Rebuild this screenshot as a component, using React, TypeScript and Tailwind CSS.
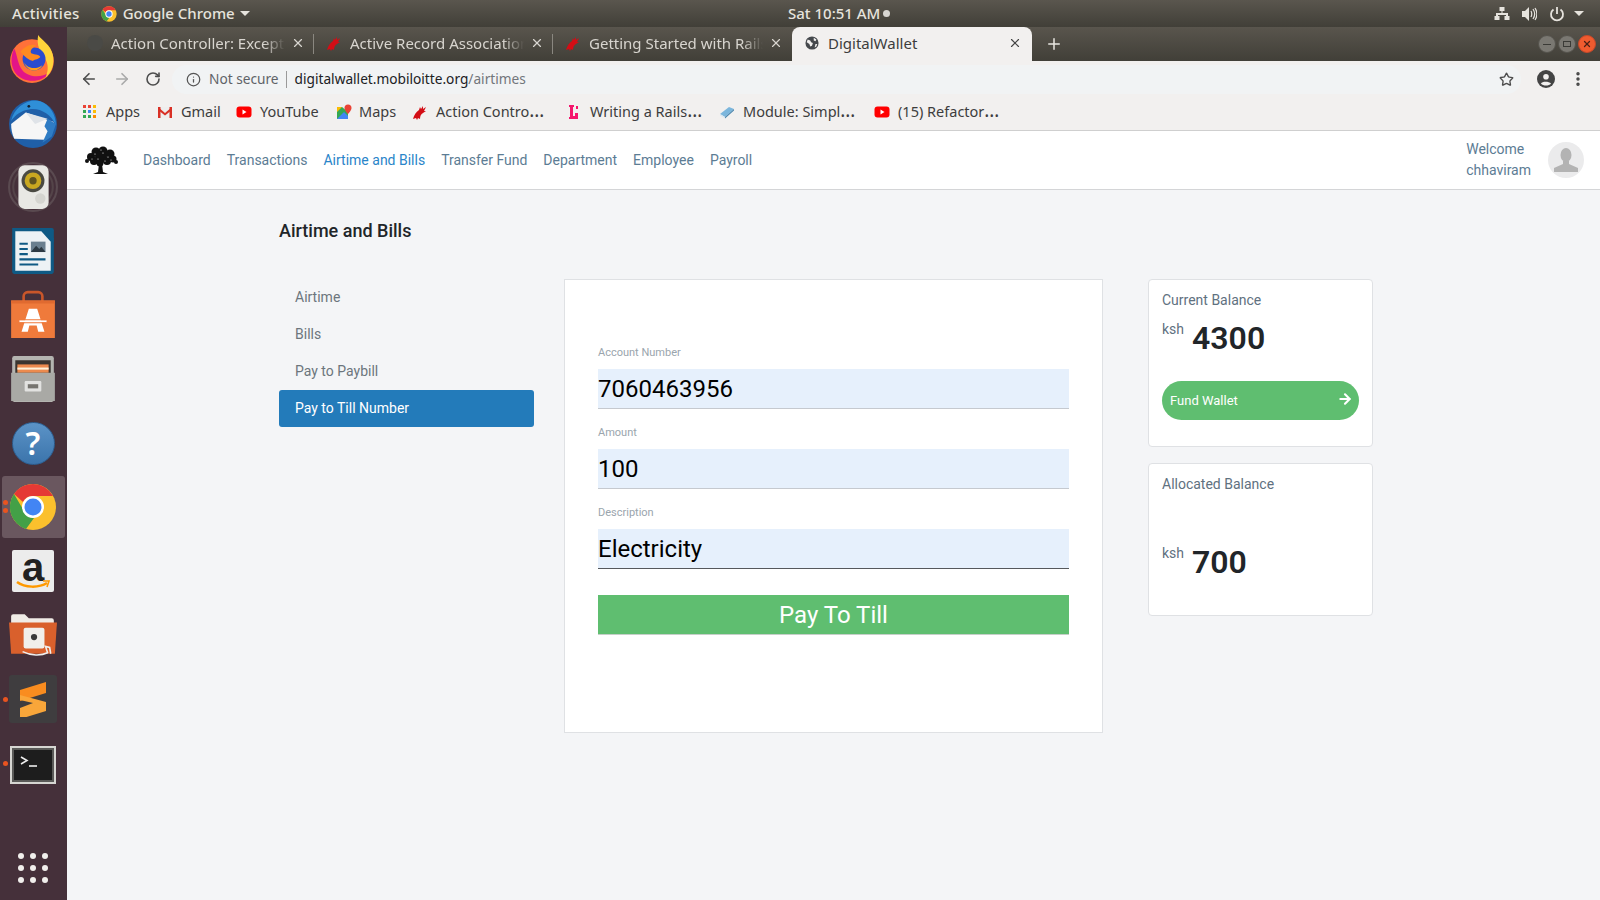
import { ArrowLeft, ArrowRight, Info, MoreVertical, Plus, RotateCw, Star, X } from "lucide-react"

const TABS = ["Action Controller: Exception", "Active Record Associations", "Getting Started with Rails"]
const NAV_LINKS = ["Dashboard", "Transactions", "Airtime and Bills", "Transfer Fund", "Department", "Employee", "Payroll"]
const MENU = ["Airtime", "Bills", "Pay to Paybill"]

const RailsMark = ({ className }: { className?: string }) => (
  <svg viewBox="0 0 16 16" className={className}>
    <path d="M1 15c1-4 3-7 6-9l1-3 1 2 2-3 0 3 3-2-2 4 2 0-3 2c-2 1-3 3-3 6l-2-1-1 2-1-2z" fill="#d30d15" />
  </svg>
)

const YoutubeMark = () => (
  <svg viewBox="0 0 16 16" className="size-4 shrink-0">
    <rect x="0.5" y="2.5" width="15" height="11" rx="3" fill="#f00" />
    <path d="M6.500 5.500v5l4-2.500z" fill="#fff" />
  </svg>
)

const AppsMark = () => (
  <div className="grid grid-cols-3 gap-[2px] shrink-0">
    {["#ea4335", "#ea4335", "#fbbc05", "#34a853", "#4285f4", "#fbbc05", "#34a853", "#34a853", "#fb8c00"].map((c, i) => (
      <span key={i} className="size-[3px]" style={{ backgroundColor: c }} />
    ))}
  </div>
)

const GmailMark = () => (
  <svg viewBox="0 0 16 16" className="size-4 shrink-0">
    <path d="M1 3h14v11H1z" fill="#eee" />
    <path d="M1 3h2.500v11H1zM12.500 3H15v11h-2.500z" fill="#d93025" />
    <path d="M1 3l7 6 7-6v3L8 11.500 1 6z" fill="#d93025" />
  </svg>
)

const MapsMark = () => (
  <svg viewBox="0 0 16 16" className="size-4 shrink-0">
    <path d="M1 3h11v12H1z" fill="#34a853" />
    <path d="M1 15l7-7 4 4v3z" fill="#4285f4" />
    <path d="M1 3h5L1 8z" fill="#fbbc05" />
    <path d="M6 3h6v5z" fill="#e8eaed" />
    <path d="M12 0.500a3.500 3.500 0 0 1 3.500 3.500c0 2.500-3.500 6-3.500 6s-3.500-3.500-3.500-6A3.500 3.500 0 0 1 12 0.500z" fill="#ea4335" />
  </svg>
)

const WritingMark = () => (
  <svg viewBox="0 0 16 16" className="size-4 shrink-0">
    <path d="M3 1h5v2H7v9h2V9h3v6H3v-2h1V3H3z" fill="#f5166c" />
    <rect x="10" y="2" width="2" height="3" fill="#f5166c" />
  </svg>
)

const ModuleMark = () => (
  <svg viewBox="0 0 16 16" className="size-4 shrink-0">
    <path d="M1 10l9-7 5 2-9 8z" fill="#7cb6dc" />
    <path d="M1 10l5 3v1.500L1 11.500z" fill="#dbe8f1" />
    <path d="M6 13l9-8v1.500L6 14.500z" fill="#4a85ad" />
  </svg>
)

const BOOKMARKS = [
  { label: "Apps", icon: <AppsMark />, width: "w-[74px]", gap: "gap-[10px]" },
  { label: "Gmail", icon: <GmailMark />, width: "w-[79px]", gap: "gap-[8px]" },
  { label: "YouTube", icon: <YoutubeMark />, width: "w-[100px]", gap: "gap-[8px]" },
  { label: "Maps", icon: <MapsMark />, width: "w-[76px]", gap: "gap-[7px]" },
  { label: "Action Contro", more: true, icon: <RailsMark className="size-4 shrink-0" />, width: "w-[154px]", gap: "gap-[8px]" },
  { label: "Writing a Rails", more: true, icon: <WritingMark />, width: "w-[153px]", gap: "gap-[8px]" },
  { label: "Module: Simpl", more: true, icon: <ModuleMark />, width: "w-[155px]", gap: "gap-[8px]" },
  { label: "(15) Refactor", more: true, icon: <YoutubeMark />, width: "w-[140px]", gap: "gap-[8px]" },
]

const Firefox = () => (
  <svg viewBox="0 0 48 48" className="size-[50px]">
    <circle cx="23" cy="26" r="21" fill="#ff7139" />
    <path d="M6 14c-5 10-3 24 8 29 9 4 20 2 26-6-8 5-20 5-26-2C9 29 9 20 6 14z" fill="#e31587" />
    <path d="M29 1c3 5 12 9 14 19 2 9-1 17-7 22 3-7 3-14-1-19-4-6-8-12-6-22z" fill="#ffd43b" />
    <circle cx="25" cy="24" r="11" fill="#2a4ccf" />
    <path d="M12 17c4-5 10-8 15-6-3 2-6 4-5 7 1 2 8 1 9 4-3 3-6 2-7 4-4-1-8-4-12-9z" fill="#ff8a1f" />
    <path d="M14 25c3 8 12 10 19 5-4 7-14 8-19-5z" fill="#ff9f1c" />
  </svg>
)

const Thunderbird = () => (
  <svg viewBox="0 0 48 48" className="size-[50px]">
    <circle cx="24" cy="25" r="23" fill="#1f5fa8" />
    <path d="M3 22C6 8 20 0 31 3c9 3 15 13 15 23-5-11-16-17-26-15C13 12 7 16 3 22z" fill="#2f8fd8" />
    <path d="M3 25l14-11 27 9-9 17-29-1c-2-4-3-9-3-14z" fill="#f6f6f6" />
    <path d="M17 14l9 11 12-5-21-6z" fill="#dfe3e8" />
    <path d="M38 20l8 5-4 12-9 6 5-11-3-5 3-7z" fill="#2f7cc4" />
    <circle cx="20" cy="8" r="1.300" fill="#123" />
  </svg>
)

const Speaker = () => (
  <svg viewBox="0 0 48 48" className="size-[50px]">
    <circle cx="24" cy="24" r="23" fill="none" stroke="#5a4a50" strokeWidth="2" />
    <circle cx="24" cy="24" r="19" fill="none" stroke="#544449" strokeWidth="2" />
    <rect x="10" y="3" width="29" height="42" rx="6" fill="#e8e8e4" />
    <circle cx="24" cy="18" r="11" fill="#4a4a42" />
    <circle cx="24" cy="18" r="8" fill="#c9a820" />
    <circle cx="24" cy="18" r="3.500" fill="#5f5420" />
    <circle cx="31" cy="35" r="5" fill="#d5d5d0" />
  </svg>
)

const Writer = () => (
  <svg viewBox="0 0 48 48" className="size-[50px]">
    <path d="M4 2h30l10 10v32a2 2 0 0 1-2 2H6a2 2 0 0 1-2-2z" fill="#0f5a85" />
    <path d="M7 5h25l9 10v28H7z" fill="#edf2f5" />
    <path d="M30 2h12a2 2 0 0 1 2 2v12z" fill="#0f5a85" />
    <path d="M11 16h8v2h-8zM11 21h8v2h-8zM11 26h8v2h-8zM11 31h25v2H11zM11 36h18v2H11z" fill="#0f5a85" />
    <rect x="22" y="15" width="14" height="10" fill="#6a7f8f" />
    <path d="M22 25l5-6 3 3 2-2 4 5z" fill="#2d3a44" />
  </svg>
)

const SoftwareBag = () => (
  <svg viewBox="0 0 48 48" className="size-[50px]">
    <path d="M15 14V6a4 4 0 0 1 4-4h10a4 4 0 0 1 4 4v8" fill="none" stroke="#c9562a" strokeWidth="2.500" />
    <path d="M3 10h42v36H3z" fill="#ef7a3b" />
    <path d="M3 10h42v3H3z" fill="#e06a30" />
    <path d="M20 18h8l7 22h-6l-1.500-6h-7L19 40h-6z" fill="#fff" />
    <path d="M11 29h26v2H11z" fill="#fff" />
    <path d="M11 28h26v1H11zM11 31h26v1H11z" fill="#ef7a3b" />
  </svg>
)

const Cabinet = () => (
  <svg viewBox="0 0 48 48" className="size-[50px]">
    <rect x="4" y="2" width="40" height="44" rx="2" fill="#b4b4b0" />
    <rect x="7" y="6" width="34" height="13" fill="#3a3530" />
    <rect x="9" y="10" width="30" height="8" fill="#ec8a4e" />
    <rect x="9" y="13" width="30" height="2" fill="#fff1d8" />
    <path d="M3 18h42v27H3z" fill="#a9a9a5" />
    <rect x="16" y="26" width="16" height="10" rx="1" fill="#e2e2e0" />
    <rect x="19" y="29" width="10" height="4" fill="#76746f" />
  </svg>
)

const Chrome = () => (
  <svg viewBox="0 0 48 48" className="size-[48px]">
    <circle cx="24" cy="24" r="23" fill="#fbc02d" />
    <path d="M24 1a23 23 0 0 1 20 12H24a11 11 0 0 0-10 6L5 11A23 23 0 0 1 24 1z" fill="#e53935" />
    <path d="M5 11l10 17a11 11 0 0 0 10 7l-8 11A23 23 0 0 1 5 11z" fill="#43a047" />
    <circle cx="24" cy="24" r="11" fill="#fff" />
    <circle cx="24" cy="24" r="8.500" fill="#4285f4" />
  </svg>
)

const Folder = () => (
  <svg viewBox="0 0 48 48" className="size-[50px]">
    <path d="M3 6a2 2 0 0 1 2-2h11l4 4h22a2 2 0 0 1 2 2v8H3z" fill="#f0ece6" />
    <path d="M1 12h46l-2 30H3z" fill="#d9602c" />
    <rect x="15" y="17" width="20" height="20" rx="2" fill="#f1efeb" />
    <circle cx="25" cy="26" r="3" fill="#3a3a3a" />
    <path d="M14 40c8 4 18 4 24 1l-2-6 4 1 1 6" fill="none" stroke="#eee" strokeWidth="1.500" />
  </svg>
)

const Sublime = () => (
  <div className="size-[48px] rounded-[3px] bg-[#3f3d3f] flex items-center justify-center">
    <svg viewBox="0 0 28 36" className="h-[36px] w-[28px]">
      <path d="M27 1v11L1 20V9z" fill="#f98c1f" />
      <path d="M1 14l26 7v9L1 38V27l13-5-13-3z" fill="#f9a63a" />
    </svg>
  </div>
)

const Terminal = () => (
  <div className="mt-[3px] h-[38px] w-[46px] border-[2px] border-[#d6d6d2] bg-[#1d1d1d] shadow-[inset_0_0_0_2px_#5a5a58] flex items-start pl-2 pt-2">
    <svg viewBox="0 0 20 12" className="w-[20px] h-[12px]">
      <path d="M1 1l6 3.500L1 8" fill="none" stroke="#eee" strokeWidth="1.600" />
      <path d="M9 10h8" stroke="#eee" strokeWidth="1.600" />
    </svg>
  </div>
)

const HelpIcon = () => (
  <div className="size-[43px] rounded-full bg-gradient-to-b from-[#5b93c7] to-[#3b74ab] border border-[#2c5f92] flex items-center justify-center text-white font-semibold text-[32px] leading-none font-['Noto_Sans',sans-serif]">
    ?
  </div>
)

const AmazonIcon = () => (
  <div className="relative size-[42px] rounded-[2px] bg-[#ececec] flex justify-center">
    <span className="text-[40px] leading-[34px] font-bold text-[#222] font-['Liberation_Sans',sans-serif]">a</span>
    <svg viewBox="0 0 36 10" className="absolute bottom-[2px] left-[3px] w-[36px] h-[10px]">
      <path d="M2 2c8 6 22 6 30 1" fill="none" stroke="#f90" strokeWidth="2.500" />
      <path d="M28 1h6l-2 6" fill="none" stroke="#f90" strokeWidth="1.600" />
    </svg>
  </div>
)

const Dot = ({ className }: { className: string }) => (
  <span className={`absolute left-[3px] size-[5px] rounded-full bg-[#e95420] ${className}`} />
)

const DOCK = [
  { key: "firefox", icon: <Firefox /> },
  { key: "thunderbird", icon: <Thunderbird /> },
  { key: "speaker", icon: <Speaker /> },
  { key: "writer", icon: <Writer /> },
  { key: "bag", icon: <SoftwareBag /> },
  { key: "cabinet", icon: <Cabinet /> },
  { key: "help", icon: <HelpIcon /> },
  { key: "chrome", icon: <Chrome />, active: true },
  { key: "amazon", icon: <AmazonIcon /> },
  { key: "folder", icon: <Folder /> },
  { key: "sublime", icon: <Sublime />, dot: true },
  { key: "terminal", icon: <Terminal />, dot: true },
]

const Dock = () => (
  <aside className="w-[67px] shrink-0 bg-[#45303a] flex flex-col">
    {DOCK.map((d) => (
      <div key={d.key} className="relative h-16 pr-px flex items-center justify-center">
        {d.active && <div className="absolute inset-x-[2px] inset-y-px rounded-[3px] bg-[#6a575f]" />}
        {d.active && <Dot className="top-[25px]" />}
        {d.active && <Dot className="top-[33px]" />}
        {d.dot && <Dot className="top-[30px]" />}
        <div className="relative">{d.icon}</div>
      </div>
    ))}
    <div className="mt-auto mb-[17px] grid grid-cols-3 gap-x-[6px] gap-y-[6px] self-center pr-px">
      {Array.from({ length: 9 }).map((_, i) => (
        <span key={i} className="size-[6px] rounded-full bg-[#f1efec]" />
      ))}
    </div>
  </aside>
)

const TopBar = () => (
  <header className="h-[27px] shrink-0 bg-gradient-to-b from-[#5a564e] to-[#413f38] flex items-center text-[15px] font-medium text-[#e6e3dd] relative font-['Noto_Sans',sans-serif]">
    <span className="ml-3 tracking-[0.3px]">Activities</span>
    <svg viewBox="0 0 48 48" className="ml-[21px] size-4">
      <circle cx="24" cy="24" r="23" fill="#fbc02d" />
      <path d="M24 1a23 23 0 0 1 20 12H24a11 11 0 0 0-10 6L5 11A23 23 0 0 1 24 1z" fill="#e53935" />
      <path d="M5 11l10 17a11 11 0 0 0 10 7l-8 11A23 23 0 0 1 5 11z" fill="#43a047" />
      <circle cx="24" cy="24" r="11" fill="#fff" />
      <circle cx="24" cy="24" r="8" fill="#4285f4" />
    </svg>
    <span className="ml-[6px]">Google Chrome</span>
    <span className="ml-[5px] border-x-[5px] border-x-transparent border-t-[5px] border-t-[#e6e3dd]" />
    <div className="absolute left-[788px] flex items-center gap-[3px]">
      <span>Sat 10:51 AM</span>
      <span className="size-[7px] rounded-full bg-[#d8d6d2]" />
    </div>
    <div className="ml-auto mr-[16px] flex items-center">
      <svg viewBox="0 0 16 16" className="size-4 fill-[#e6e3dd]">
        <path d="M5.500 1h5v4h-2v2H14v3h1.500v4h-5v-4H12V9H4v1h1.500v4h-5v-4H2V7h5.500V5h-2z" />
      </svg>
      <svg viewBox="0 0 16 16" className="ml-[11px] size-4">
        <path d="M1 5h3l4-4v14l-4-4H1z" fill="#e6e3dd" />
        <path d="M10 5c1 2 1 4 0 6M12 3c2 3 2 7 0 10M14 2c2.500 4 2.500 8 0 12" fill="none" stroke="#e6e3dd" strokeWidth="1.200" />
      </svg>
      <svg viewBox="0 0 16 16" className="ml-[12px] size-4 fill-none stroke-[#e6e3dd] stroke-[1.800]">
        <path d="M8 1v7M4.500 3.500a6 6 0 1 0 7 0" />
      </svg>
      <span className="ml-[9px] border-x-[5px] border-x-transparent border-t-[5px] border-t-[#e6e3dd]" />
    </div>
  </header>
)

const TabStrip = () => (
  <div className="h-[34px] shrink-0 bg-gradient-to-b from-[#59554d] to-[#413f38] flex items-stretch pl-2 text-[15px] font-['Noto_Sans',sans-serif]">
    {TABS.map((tab, i) => (
      <div key={tab} className={`w-[239px] flex items-center pl-[12px] pr-[9px] pb-[2px] text-[#d8d5cf] ${i < 2 ? "relative" : ""}`}>
        {i === 0 ? <span className="size-[16px] rounded-full bg-[#4a4a46] shrink-0" /> : <RailsMark className="size-4 shrink-0" />}
        <span className="ml-[8px] flex-1 overflow-hidden whitespace-nowrap [mask-image:linear-gradient(to_right,black_88%,transparent)]">{tab}</span>
        <X className="ml-[6px] size-[14px] shrink-0 text-[#d8d5cf]" />
        {i < 2 && <span className="absolute right-0 top-[7px] h-5 w-px bg-[#8a8780]" />}
      </div>
    ))}
    <div className="w-[240px] rounded-t-[8px] bg-[#f2f0ef] flex items-center pl-[13px] pr-[10px] pb-[2px] text-[#3d3d3d]">
      <svg viewBox="0 0 16 16" className="size-[14px] shrink-0">
        <circle cx="8" cy="8" r="7.500" fill="#45484c" />
        <path d="M3 4l3 1 1 2 2 1-1 3-2 1-1-3-3-2zM10 2l3 2-1 2-2-1zM12 9l2 0-1 3-2 1z" fill="#f2f0ef" />
      </svg>
      <span className="ml-[9px] flex-1">DigitalWallet</span>
      <X className="size-[14px] text-[#444]" />
    </div>
    <Plus className="ml-[13px] size-[18px] self-center text-[#e8e6e1]" />
    <div className="ml-auto mr-[4px] flex items-center gap-[2px]">
      <span className="size-[18px] rounded-full bg-[#7a7872] border border-[#55534d] flex items-center justify-center">
        <span className="h-px w-2 bg-[#3a3a36]" />
      </span>
      <span className="size-[18px] rounded-full bg-[#7a7872] border border-[#55534d] flex items-center justify-center">
        <span className="h-[6px] w-2 border border-[#3a3a36]" />
      </span>
      <span className="size-[18px] rounded-full bg-[#ef5b2f] border border-[#c7482a] flex items-center justify-center">
        <X className="size-[10px] text-[#4a2015]" strokeWidth={3} />
      </span>
    </div>
  </div>
)

const Toolbar = () => (
  <div className="h-[34px] shrink-0 bg-[#f2f0ef] pt-[2px] flex items-center font-['Noto_Sans',sans-serif]">
    <ArrowLeft className="ml-[13px] size-[18px] text-[#4d4d4d]" strokeWidth={2.2} />
    <ArrowRight className="ml-[15px] size-[18px] text-[#a9a9a9]" strokeWidth={2.2} />
    <RotateCw className="ml-[14px] size-[16px] text-[#4d4d4d]" strokeWidth={2.4} />
    <div className="ml-[11px] h-[29px] w-[1349px] rounded-full bg-[#f1f3f4] flex items-center pl-[14px] text-[13.7px]">
      <Info className="size-[15px] text-[#555]" />
      <span className="ml-[8px] text-[#5f6368]">Not secure</span>
      <span className="ml-[7px] h-[17px] w-px bg-[#9a9a9a]" />
      <span className="ml-[8px] text-[#202124]">digitalwallet.mobiloitte.org</span>
      <span className="text-[#72767b]">/airtimes</span>
      <Star className="ml-auto mr-[7px] size-[15px] text-[#4d4d4d]" strokeWidth={2.2} />
    </div>
    <svg viewBox="0 0 16 16" className="ml-[16px] size-[18px] shrink-0">
      <circle cx="8" cy="8" r="8" fill="#444" />
      <circle cx="8" cy="6" r="2.500" fill="#f2f0ef" />
      <path d="M3.500 12c1-2 7-2 9 0-2 2.500-7 2.500-9 0z" fill="#f2f0ef" />
    </svg>
    <MoreVertical className="ml-[14px] size-[18px] text-[#444]" strokeWidth={2.6} />
  </div>
)

const BookmarksBar = () => (
  <div className="h-[36px] shrink-0 bg-[#f2f0ef] border-b border-[#cfcfcf] flex items-center pl-[16px] pb-[2px] text-[14.5px] text-[#3d3d3d] font-['Noto_Sans',sans-serif]">
    {BOOKMARKS.map((b) => (
      <div key={b.label} className={`${b.width} ${b.gap} flex items-center whitespace-nowrap`}>
        {b.icon}
        <span>
          {b.label}
          {b.more && <span className="text-[19px] leading-none">…</span>}
        </span>
      </div>
    ))}
  </div>
)

const TreeLogo = () => (
  <svg viewBox="0 0 36 30" className="h-[30px] w-[36px]">
    <g fill="#111">
      <circle cx="8" cy="12" r="4" />
      <circle cx="13" cy="7" r="4.500" />
      <circle cx="20" cy="6" r="4.500" />
      <circle cx="27" cy="9" r="4.500" />
      <circle cx="30" cy="14" r="3.500" />
      <circle cx="18" cy="12" r="6" />
      <circle cx="11" cy="16" r="4" />
      <circle cx="24" cy="16" r="4" />
      <circle cx="4" cy="16" r="2" />
      <circle cx="33" cy="17" r="2" />
      <circle cx="17" cy="18" r="3.500" />
      <path d="M16 19h3l1 8 5 2H10l5-2z" />
    </g>
    <g fill="#fff">
      <circle cx="12" cy="9" r="0.600" />
      <circle cx="20" cy="8" r="0.600" />
      <circle cx="25" cy="12" r="0.600" />
      <circle cx="15" cy="14" r="0.600" />
      <circle cx="9" cy="14" r="0.500" />
      <circle cx="22" cy="16" r="0.600" />
      <circle cx="28" cy="15" r="0.500" />
      <circle cx="18" cy="5" r="0.500" />
    </g>
  </svg>
)

const Avatar = () => (
  <svg viewBox="0 0 36 36" className="size-9 rounded-full">
    <rect width="36" height="36" fill="#ebebec" />
    <ellipse cx="18" cy="13" rx="5.500" ry="7" fill="#b3b3b3" />
    <path d="M15 19v3l-9 4v4h24v-4l-9-4v-3z" fill="#b3b3b3" />
  </svg>
)

const AppNavbar = () => (
  <nav className="h-[59px] shrink-0 bg-white border-b border-[#d4d5d7] flex items-center pl-[16px] pr-[16px] text-sm text-[#5c7c94]">
    <TreeLogo />
    <ul className="ml-[24px] flex items-center gap-4">
      {NAV_LINKS.map((link) => (
        <li key={link} className={link === "Airtime and Bills" ? "text-[#2a85c9]" : ""}>
          {link}
        </li>
      ))}
    </ul>
    <div className="ml-auto leading-[21px]">
      <div>Welcome</div>
      <div>chhaviram</div>
    </div>
    <div className="ml-[17px]">
      <Avatar />
    </div>
  </nav>
)

const Field = ({ label, value, focused }: { label: string; value: string; focused?: boolean }) => (
  <div className="flex flex-col">
    <label className="text-[11px] leading-[13px] text-[#9aa5ad]">{label}</label>
    <input
      readOnly
      value={value}
      className={`mt-[10px] h-10 w-full bg-[#e6f0fc] border-b text-2xl text-black outline-none ${focused ? "border-[#55585c]" : "border-[#c5c9cf]"}`}
    />
  </div>
)

const PayForm = () => (
  <section className="w-[539px] h-[454px] shrink-0 bg-white border border-[#dfe1e4] px-[33px] pt-[66px]">
    <div className="flex flex-col gap-[17px]">
      <Field label="Account Number" value="7060463956" />
      <Field label="Amount" value="100" />
      <Field label="Description" value="Electricity" focused />
    </div>
    <button className="mt-[26px] h-10 w-full bg-[#5fbe70] border-b border-[#c5cfc8] text-2xl text-white">Pay To Till</button>
  </section>
)

const Amount = ({ value }: { value: string }) => (
  <div className="flex items-start">
    <span className="text-sm text-[#5f7180] mt-[7px]">ksh</span>
    <span className="ml-[8px] text-[32px] leading-[46px] font-semibold text-[#212529] mt-[3px]">{value}</span>
  </div>
)

const Balances = () => (
  <div className="ml-[45px] w-[225px] flex flex-col gap-4">
    <div className="h-[168px] rounded-[4px] bg-white border border-[#dfe1e4] pl-[13px] pr-[13px] pt-[10px]">
      <div className="text-sm leading-[20px] text-[#5f7180]">Current Balance</div>
      <div className="mt-[2px]">
        <Amount value="4300" />
      </div>
      <button className="mt-[20px] h-[39px] w-full rounded-full bg-[#5fbe70] pl-[8px] pr-[6px] flex items-center justify-between text-[13px] text-white">
        <span>Fund Wallet</span>
        <ArrowRight className="size-4 -mt-[3px]" strokeWidth={3.2} />
      </button>
    </div>
    <div className="h-[153px] rounded-[4px] bg-white border border-[#dfe1e4] pl-[13px] pt-[10px]">
      <div className="text-sm leading-[20px] text-[#5f7180]">Allocated Balance</div>
      <div className="mt-[42px]">
        <Amount value="700" />
      </div>
    </div>
  </div>
)

const Airtime = () => (
  <main className="flex-1 bg-[#f4f5f7] pl-[212px] pt-[28px] font-['Roboto',sans-serif]">
    <h1 className="text-lg leading-[26px] font-medium text-[#212529]">Airtime and Bills</h1>
    <div className="mt-[35px] flex items-start">
      <ul className="w-[255px] shrink-0 mr-[30px] text-sm text-[#6c757d]">
        {MENU.map((item) => (
          <li key={item} className="h-[37px] pl-4 pb-[2px] flex items-center">
            {item}
          </li>
        ))}
        <li className="h-[37px] pl-4 pb-[2px] flex items-center rounded-[3px] bg-[#237bba] text-white">Pay to Till Number</li>
      </ul>
      <PayForm />
      <Balances />
    </div>
  </main>
)

export default function App() {
  return (
    <div className="h-[900px] w-[1600px] overflow-hidden flex flex-col font-['Roboto',sans-serif]">
      <TopBar />
      <div className="flex-1 flex min-h-0">
        <Dock />
        <div className="flex-1 flex flex-col min-w-0">
          <TabStrip />
          <Toolbar />
          <BookmarksBar />
          <AppNavbar />
          <Airtime />
        </div>
      </div>
    </div>
  )
}
